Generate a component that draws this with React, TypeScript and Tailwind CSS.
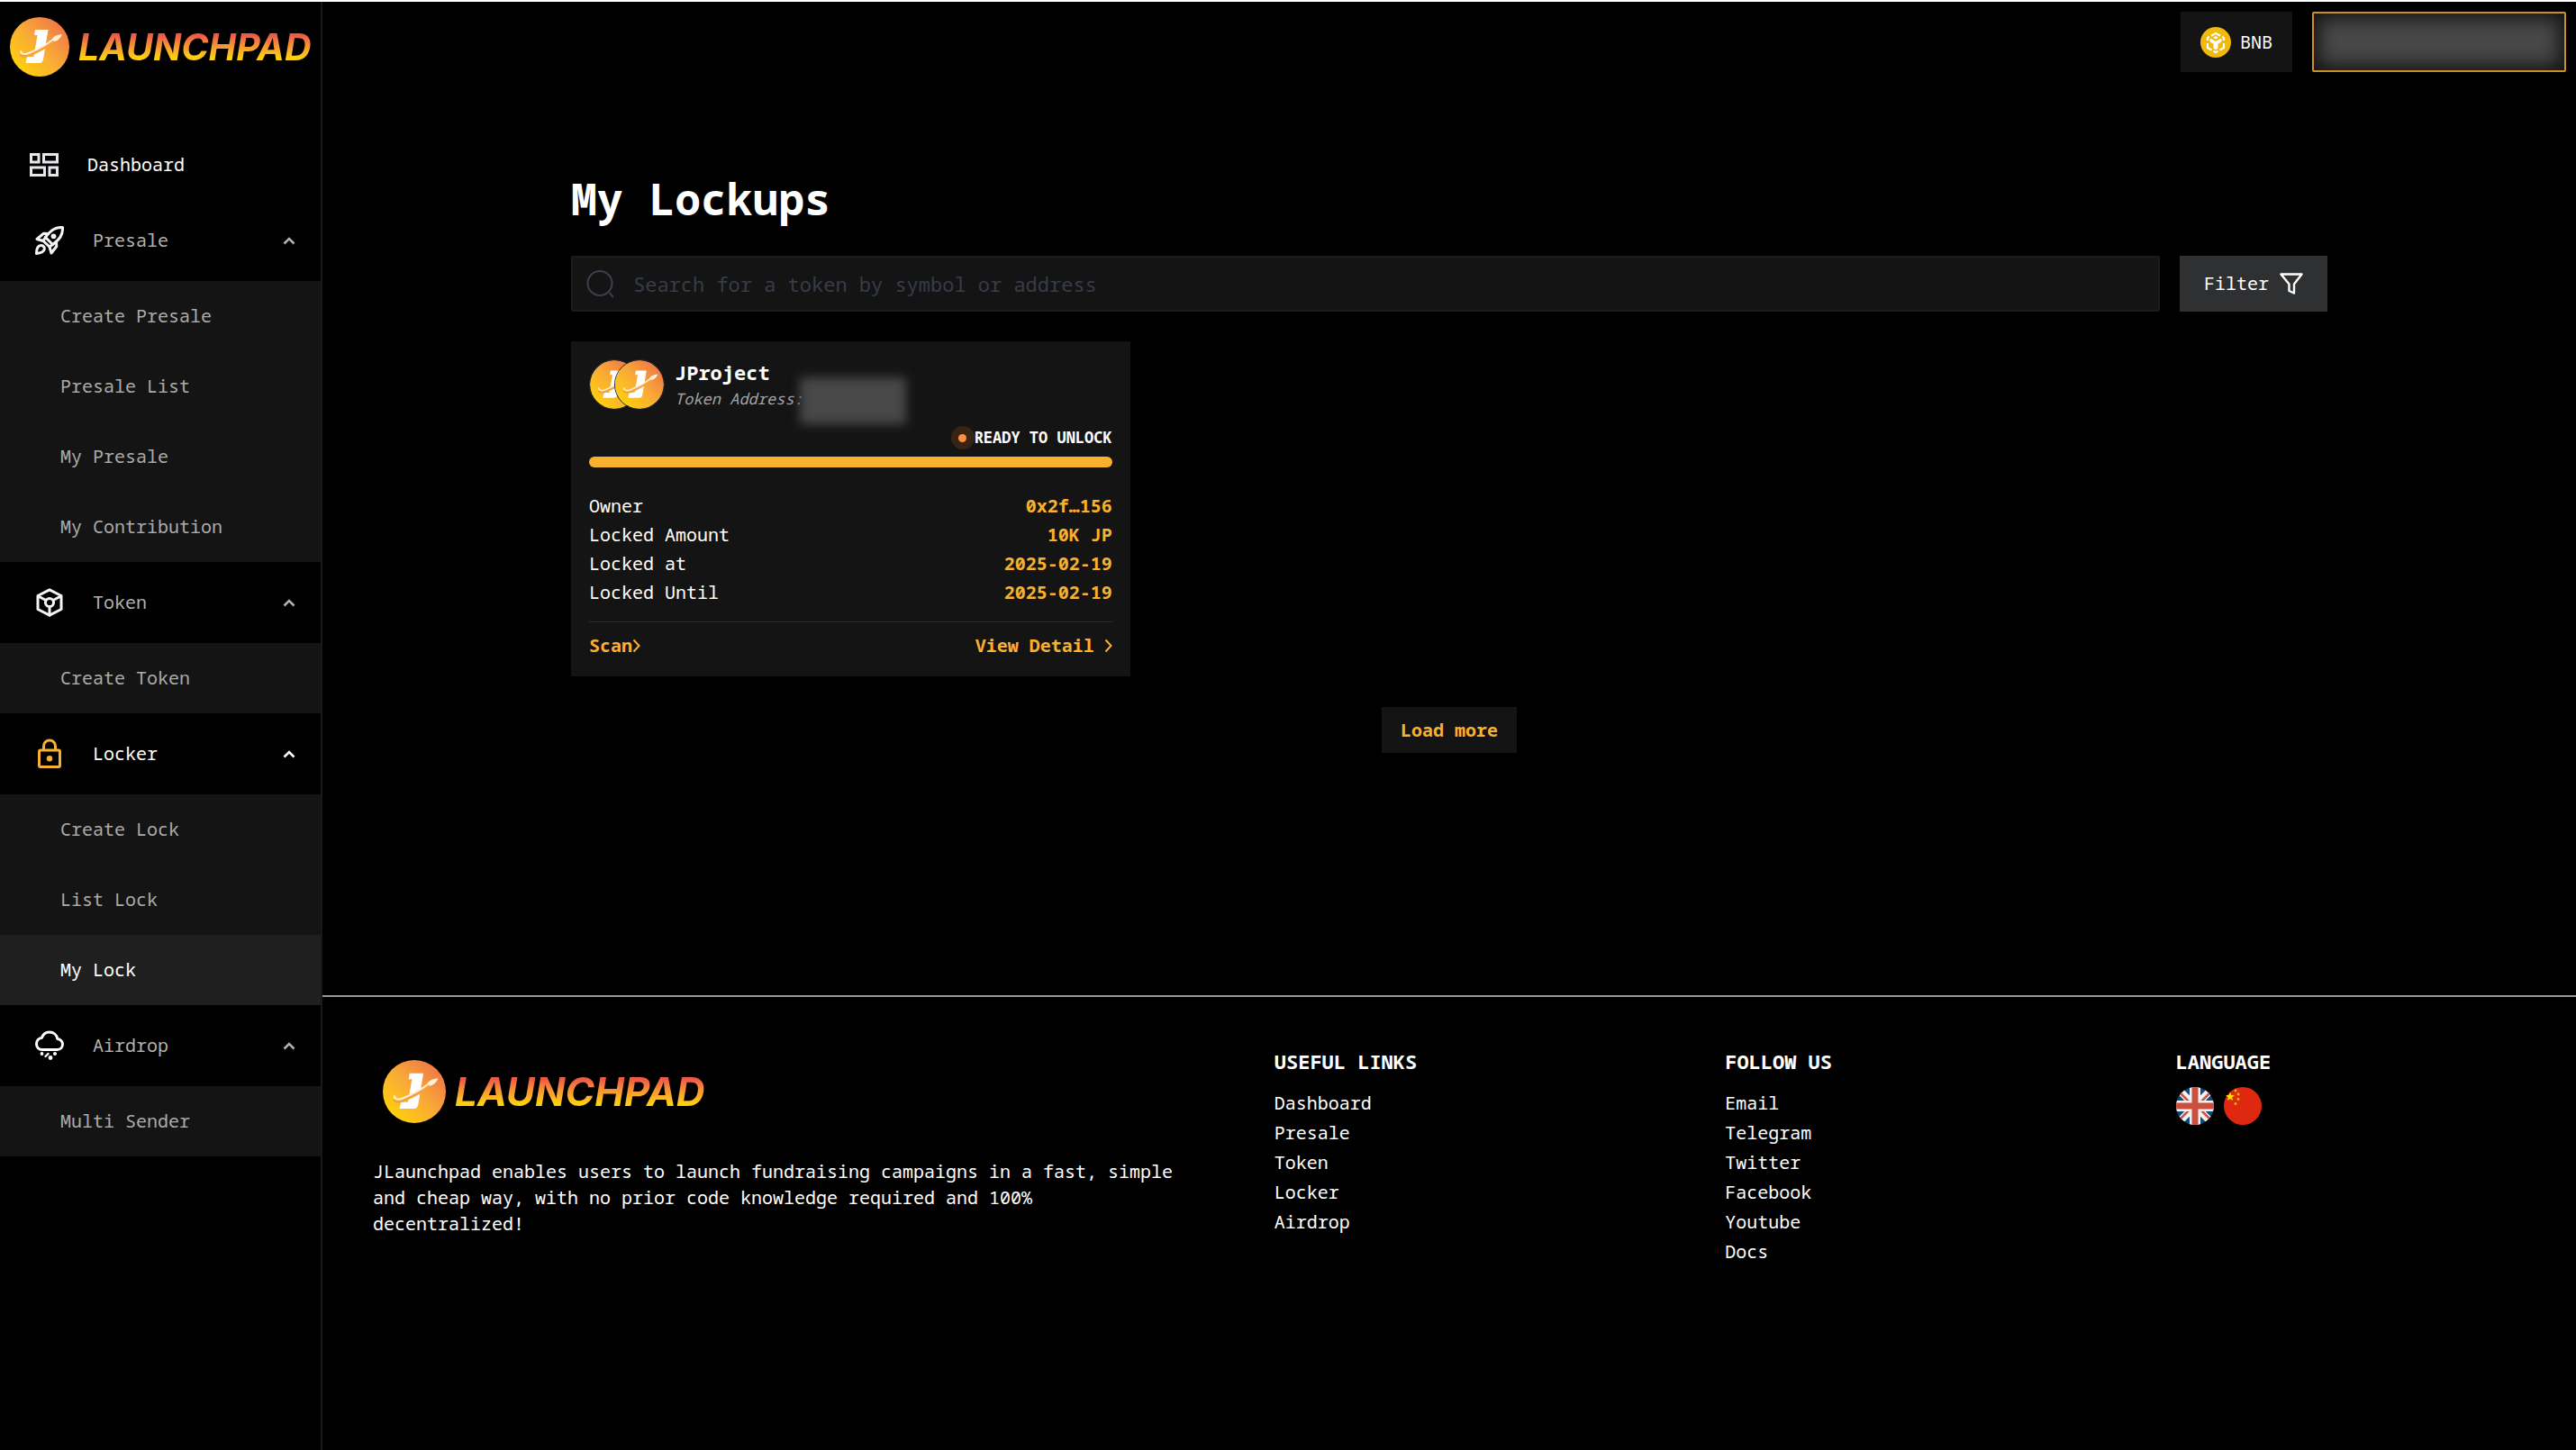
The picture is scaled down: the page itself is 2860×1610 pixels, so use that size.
import type { ReactNode } from "react";

function CoinMark({ id, className }: { id: string; className: string }) {
  return (
    <svg viewBox="0 0 66 66" className={className} aria-hidden="true">
      <defs>
        <linearGradient id={id} x1="0.15" y1="0.9" x2="0.9" y2="0.15">
          <stop offset="0" stopColor="#ffd00c" />
          <stop offset="0.5" stopColor="#f9ab36" />
          <stop offset="1" stopColor="#ef7846" />
        </linearGradient>
      </defs>
      <circle cx="33" cy="33" r="33" fill={`url(#${id})`} />
      <path d="M28 14h14.500l-5.500 33q-.8 4-4.500 4H17.500l1.500-7h7.500l4-24H27z" fill="#fff" />
      <path d="M12 41q2 4 9 1 18-7 29-17" fill="none" stroke="#f6a23c" strokeWidth="3.500" />
      <path d="M12 38q1 5 9 2 17-7 28-16" fill="none" stroke="#fff0dc" strokeWidth="2" strokeLinecap="round" />
      <path d="M47 24q2-4 11-5-3 7-9 8z" fill="#fff0dc" />
    </svg>
  );
}

const stroke = {
  fill: "none",
  stroke: "currentColor",
  strokeWidth: 3,
  strokeLinejoin: "round" as const,
  strokeLinecap: "round" as const,
};

function DashboardIcon() {
  return (
    <svg viewBox="0 0 32 26" className="h-[26px] w-8 text-gray-200" aria-hidden="true">
      <g fill="none" stroke="currentColor" strokeWidth="3">
        <path d="M1.500 1.500h8.500v8.500H1.500zM15.500 1.500h15v8.500h-15zM1.500 16h15v8.500h-15zM22 16h8.500v8.500H22z" />
      </g>
    </svg>
  );
}

function RocketIcon() {
  return (
    <svg viewBox="0 0 32 32" className="size-8 text-gray-100" aria-hidden="true">
      <g {...stroke}>
        <path d="M30.500 1.500C22 1 17 5 11.500 12.500L19.500 20.500C27 15 31 10 30.500 1.500Z" />
        <path d="M14.500 8.500 9.500 8.200 2 14.500 9 16.500 11.500 12.500" />
        <path d="M23.500 17.500 23.800 22.500 18 30 16 23 19.500 20.500" />
        <path d="M9 16.500 16 23" />
        <path d="M1.500 30.500C1.500 25 3 21.500 6.500 21.500 9.500 21.500 11 24 10 26.500 9 29 6 30 1.500 30.500Z" />
      </g>
      <circle cx="20.500" cy="11.300" r="2.900" fill="currentColor" />
    </svg>
  );
}

function TokenIcon() {
  return (
    <svg viewBox="0 0 32 32" className="size-8 text-gray-100" aria-hidden="true">
      <g {...stroke}>
        <path d="M16 1.800 29 8.500V23.500L16 30.200 3 23.500V8.500Z" />
        <circle cx="16" cy="16" r="4.600" />
        <path d="M3.500 9 12 13.500M28.500 9 20 13.500M16 21V30" />
      </g>
    </svg>
  );
}

function LockIcon() {
  return (
    <svg viewBox="0 0 32 34" className="h-[34px] w-8 text-[#f9b02d]" aria-hidden="true">
      <g {...stroke}>
        <rect x="4.500" y="13" width="23" height="18.500" rx="1.500" />
        <path d="M9.500 12.500V8.500a6.500 6.500 0 0 1 13 0v4" />
      </g>
      <circle cx="16" cy="22.300" r="3.200" fill="currentColor" />
    </svg>
  );
}

function AirdropIcon() {
  return (
    <svg viewBox="0 0 32 34" className="h-[34px] w-8 text-white" aria-hidden="true">
      <g {...stroke}>
        <path d="M8 21.500C4 21.500 1.500 18.500 1.500 15.200 1.500 11.500 4 8.800 7.500 8.300 9 4 12 2 15.800 2 20.500 2 24 5 24.800 9.500 28 10 30.500 12.300 30.500 15.500 30.500 19 28 21.500 24.500 21.500Z" />
        <path d="M11.500 29 14.500 26" strokeWidth="2.400" />
      </g>
      <g fill="currentColor">
        <circle cx="7.500" cy="26" r="1.900" />
        <circle cx="22" cy="26" r="2" />
        <circle cx="17" cy="30.500" r="2.400" />
      </g>
    </svg>
  );
}

function BnbIcon() {
  return (
    <svg viewBox="0 0 34 34" className="size-[34px]" aria-hidden="true">
      <circle cx="17" cy="17" r="17" fill="#f0b90b" />
      <g fill="none" stroke="#fff" strokeWidth="2.200">
        <path d="M12 9.700 17 6.900l5 2.800M8 15V12l2-1.200M26 15V12l-2-1.200M8 18v5l4.500 2.600M26 18v5l-4.500 2.600M14.500 26.800 17 28.200l2.500-1.400" />
      </g>
      <path d="M11.500 12.800 17 16l5.500-3.200 1 .6v2.800l-4 2.500v5L17 25.200l-2.500-1.500v-5l-4-2.500v-2.800z" fill="#fff" />
      <path d="M17 10 20 11.800 17 13.500 14 11.800z" fill="#fff" />
    </svg>
  );
}

function FunnelIcon() {
  return (
    <svg viewBox="0 0 26 24" className="h-6 w-[26px]" aria-hidden="true">
      <path
        d="M1.500 1.500h23L16 12.500v10L10.500 20v-7.500Z"
        fill="none"
        stroke="currentColor"
        strokeWidth="2.400"
        strokeLinejoin="round"
      />
    </svg>
  );
}

function SearchIcon() {
  return (
    <svg viewBox="0 0 32 32" className="size-8 shrink-0 text-[#3a414c]" aria-hidden="true">
      <g fill="none" stroke="currentColor" strokeWidth="2">
        <circle cx="15" cy="15.500" r="13.500" />
        <path d="M25.500 26 30 31" />
      </g>
    </svg>
  );
}

function Chevron({ className }: { className: string }) {
  return (
    <svg viewBox="0 0 14 9" className={className} aria-hidden="true">
      <path d="M1.500 7.500 7 2l5.500 5.500" fill="none" stroke="currentColor" strokeWidth="2.600" />
    </svg>
  );
}

function ArrowRight() {
  return (
    <svg viewBox="0 0 9 16" className="h-4 w-[9px]" aria-hidden="true">
      <path d="M1.500 1.500 7.500 8l-6 6.500" fill="none" stroke="currentColor" strokeWidth="2" />
    </svg>
  );
}

function UkFlag() {
  return (
    <svg viewBox="0 0 42 42" className="size-[42px]" aria-hidden="true">
      <clipPath id="uk-round">
        <circle cx="21" cy="21" r="21" />
      </clipPath>
      <g clipPath="url(#uk-round)">
        <rect width="42" height="42" fill="#0b4a80" />
        <path d="M0 0 42 42M42 0 0 42" stroke="#f4f2f0" strokeWidth="8" />
        <path d="M3 5 18 20M39 5 24 20M3 37 18 22M39 37 24 22" stroke="#d05046" strokeWidth="2.500" />
        <path d="M21 0v42M0 21h42" stroke="#f4f2f0" strokeWidth="12" />
        <path d="M21 0v42M0 21h42" stroke="#c9503f" strokeWidth="7" />
      </g>
    </svg>
  );
}

function ChinaFlag() {
  return (
    <svg viewBox="0 0 42 42" className="size-[42px]" aria-hidden="true">
      <circle cx="21" cy="21" r="21" fill="#de2910" />
      <path d="M7 5.500 8.300 9 12 9.200 9.200 11.500 10.200 15 7 13 3.800 15 4.800 11.500 2 9.200 5.700 9z" fill="#ffde00" />
      <g fill="#e9b908">
        <circle cx="13" cy="4" r="1.400" />
        <circle cx="16" cy="8" r="1.400" />
        <circle cx="16" cy="13.500" r="1.400" />
        <circle cx="13" cy="18.500" r="1.400" />
      </g>
    </svg>
  );
}

type Group = { label: string; icon: ReactNode; active?: boolean; items: { label: string; active?: boolean }[] };

const groups: Group[] = [
  {
    label: "Presale",
    icon: <RocketIcon />,
    items: [{ label: "Create Presale" }, { label: "Presale List" }, { label: "My Presale" }, { label: "My Contribution" }],
  },
  { label: "Token", icon: <TokenIcon />, items: [{ label: "Create Token" }] },
  {
    label: "Locker",
    icon: <LockIcon />,
    active: true,
    items: [{ label: "Create Lock" }, { label: "List Lock" }, { label: "My Lock", active: true }],
  },
  { label: "Airdrop", icon: <AirdropIcon />, items: [{ label: "Multi Sender" }] },
];

function Sidebar() {
  return (
    <aside className="w-[358px] shrink-0 border-r-2 border-[#191919]">
      <a href="#home" className="flex items-center gap-2.5 pt-[17px] pl-[11px]">
        <CoinMark id="coin-side" className="size-[66px]" />
        <span className="bg-gradient-to-b from-[#ef5a45] from-25% via-[#f8992f] via-50% to-[#fdd00e] to-75% bg-clip-text pr-2 [font-family:Inter,sans-serif] text-[41px] leading-[50px] font-bold text-transparent italic">
          LAUNCHPAD
        </span>
      </a>
      <nav className="pt-[59px]" aria-label="Main">
        <a href="#dashboard" className="flex h-[78px] items-center gap-8 pl-[33px] text-white">
          <DashboardIcon />
          Dashboard
        </a>
        {groups.map((group) => (
          <div key={group.label}>
            <button
              type="button"
              aria-expanded="true"
              className={`flex h-[90px] w-full items-center gap-8 pr-7 pl-[39px] ${group.active ? "text-white" : "text-[#b0b0b0]"}`}
            >
              {group.icon}
              <span className="flex-1 text-left">{group.label}</span>
              <Chevron className="h-[9px] w-3.5" />
            </button>
            <ul className="bg-[#141414]">
              {group.items.map((item) => (
                <li key={item.label}>
                  <a
                    href="#item"
                    className={`flex h-[78px] items-center pl-[67px] ${item.active ? "bg-[#1f1f1f] text-white" : "text-[#ababab]"}`}
                  >
                    {item.label}
                  </a>
                </li>
              ))}
            </ul>
          </div>
        ))}
      </nav>
    </aside>
  );
}

const details = [
  ["Owner", "0x2f…156"],
  ["Locked Amount", "10K JP"],
  ["Locked at", "2025-02-19"],
  ["Locked Until", "2025-02-19"],
];

function LockCard() {
  return (
    <article className="bg-[#141414] px-5 pt-5 pb-5">
      <div className="flex gap-[11px]">
        <div className="flex">
          <CoinMark id="coin-a" className="size-14 rounded-full border border-[#1f2937]" />
          <CoinMark id="coin-b" className="-ml-7 size-14 rounded-full border border-[#1f2937]" />
        </div>
        <div>
          <h2 className="text-[22px] leading-7 font-bold">JProject</h2>
          <div className="flex text-[17px] leading-8 text-[#a3a3a3] italic">
            Token Address:
            <span className="relative">
              <span className="absolute -top-2 -left-1 h-[52px] w-[118px] bg-[#484848] blur-[6px]" />
            </span>
          </div>
        </div>
      </div>
      <div className="mt-3.5 flex items-center justify-end text-[17px] leading-[26px] font-bold">
        <span className="flex size-[26px] items-center justify-center rounded-full bg-[#382414]">
          <span className="size-[9px] rounded-full bg-[#ff8f3c]" />
        </span>
        READY TO UNLOCK
      </div>
      <div className="mt-2 h-3 rounded-md bg-[#f9b02d]" />
      <dl className="mt-[27px]">
        {details.map(([label, value]) => (
          <div key={label} className="flex h-8 items-center justify-between">
            <dt>{label}</dt>
            <dd className="font-bold text-[#f9b02d]">{value}</dd>
          </div>
        ))}
      </dl>
      <div className="mt-4 flex items-center justify-between border-t border-[#2c2c2c] pt-3 font-bold text-[#f9b02d]">
        <a href="#scan" className="flex items-center">
          Scan
          <ArrowRight />
        </a>
        <a href="#detail" className="flex items-center gap-[11px]">
          View Detail
          <ArrowRight />
        </a>
      </div>
    </article>
  );
}

const linkColumns = [
  { title: "USEFUL LINKS", links: ["Dashboard", "Presale", "Token", "Locker", "Airdrop"] },
  { title: "FOLLOW US", links: ["Email", "Telegram", "Twitter", "Facebook", "Youtube", "Docs"] },
];

function Footer() {
  return (
    <footer className="grid min-h-[505px] grid-cols-5 border-t-2 border-[#9b989d] pt-[55px] text-white">
      <div className="col-span-2 pr-12 pl-14">
        <div className="flex items-center gap-2.5 pt-[15px] pl-[11px]">
          <CoinMark id="coin-foot" className="size-[70px]" />
          <span className="bg-gradient-to-b from-[#ef5a45] from-25% via-[#f8992f] via-50% to-[#fdd00e] to-75% bg-clip-text pr-2 [font-family:Inter,sans-serif] text-[44px] leading-[54px] font-bold text-transparent italic">
            LAUNCHPAD
          </span>
        </div>
        <p className="mt-[39px] leading-[29px]">
          JLaunchpad enables users to launch fundraising campaigns in a fast, simple and cheap way, with no prior code
          knowledge required and 100% decentralized!
        </p>
      </div>
      {linkColumns.map((column) => (
        <div key={column.title} className="pl-14">
          <h3 className="text-[22px] leading-8 font-bold">{column.title}</h3>
          <ul className="mt-3.5">
            {column.links.map((link) => (
              <li key={link} className="flex h-[33px] items-center">
                <a href="#link">{link}</a>
              </li>
            ))}
          </ul>
        </div>
      ))}
      <div className="pl-14">
        <h3 className="text-[22px] leading-8 font-bold">LANGUAGE</h3>
        <div className="mt-[13px] flex gap-[11px]">
          <button type="button" aria-label="English">
            <UkFlag />
          </button>
          <button type="button" aria-label="Chinese">
            <ChinaFlag />
          </button>
        </div>
      </div>
    </footer>
  );
}

export default function App() {
  return (
    <div className="flex min-h-screen border-t-2 border-white bg-black [font-family:'Noto_Sans_Mono','DejaVu_Sans_Mono',monospace] text-[20px] leading-7 text-white">
      <Sidebar />
      <div className="flex min-w-0 flex-1 flex-col">
        <header className="flex justify-end gap-[22px] pt-[11px] pr-[11px]">
          <button type="button" className="flex h-[67px] items-center gap-2.5 bg-[#141414] px-[22px]">
            <BnbIcon />
            BNB
          </button>
          <button
            type="button"
            aria-label="Wallet"
            className="h-[67px] w-[282px] overflow-hidden rounded-xs border-2 border-[#c98f2c] bg-[#141414] p-1.5"
          >
            <span className="block h-full bg-[#484848] blur-[10px]" />
          </button>
        </header>
        <main className="mx-auto w-full max-w-[1950px] flex-1 pt-[111px]">
          <h1 className="text-[48px] leading-[60px] font-bold">My Lockups</h1>
          <div className="mt-[33px] flex h-[62px] gap-[22px]">
            <label className="flex flex-1 items-center gap-5 rounded-xs border-2 border-[#1b1b1b] bg-[#141414] pl-[15px]">
              <SearchIcon />
              <input
                type="text"
                aria-label="Search for a token"
                placeholder="Search for a token by symbol or address"
                className="min-w-0 flex-1 bg-transparent text-[22px] outline-none placeholder:text-[#363d48]"
              />
            </label>
            <button type="button" className="flex items-center gap-3 bg-[#2f3032] px-[27px]">
              Filter
              <FunnelIcon />
            </button>
          </div>
          <div className="mt-[33px] grid grid-cols-3 gap-11">
            <LockCard />
          </div>
          <div className="mt-[34px] flex justify-center">
            <button type="button" className="h-[51px] bg-[#141414] px-[21px] font-bold text-[#f9b02d]">
              Load more
            </button>
          </div>
        </main>
        <Footer />
      </div>
    </div>
  );
}
